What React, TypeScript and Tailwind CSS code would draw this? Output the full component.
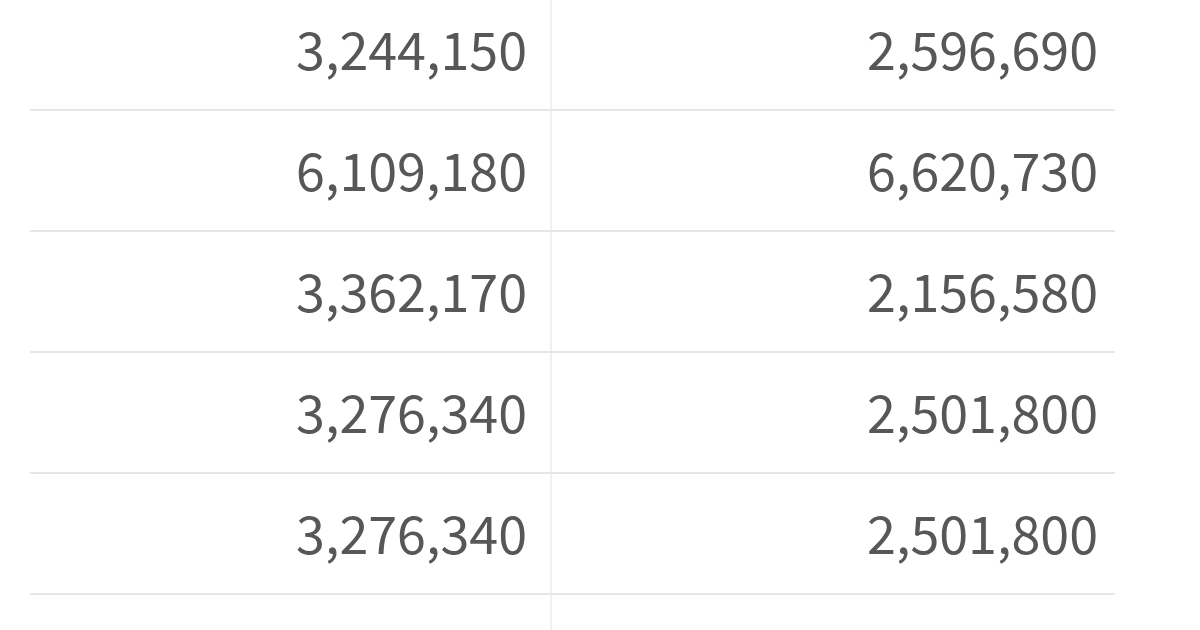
const rows: [string, string][] = [
  ['3,244,150', '2,596,690'],
  ['6,109,180', '6,620,730'],
  ['3,362,170', '2,156,580'],
  ['3,276,340', '2,501,800'],
  ['3,276,340', '2,501,800'],
  ['', ''],
];

export default function App() {
  return (
    <div className="w-[1200px] h-[630px] overflow-hidden bg-white">
      <div
        className="ml-[30px] -mt-[10px] w-[1085px] text-[52px] text-[#575757]"
        style={{ fontFamily: '"Noto Sans CJK SC", "Noto Sans", sans-serif' }}
      >
        {rows.map(([a, b], i) => (
          <div key={i} className="flex h-[121px] border-b-2 border-[#e6e6e6]">
            <div className="w-[522px] flex items-center justify-end pr-[23px] pb-[3px] border-r-2 border-[#f0f0f0]">
              {a}
            </div>
            <div className="flex-1 flex items-center justify-end pr-[17px] pb-[3px]">{b}</div>
          </div>
        ))}
      </div>
    </div>
  );
}
